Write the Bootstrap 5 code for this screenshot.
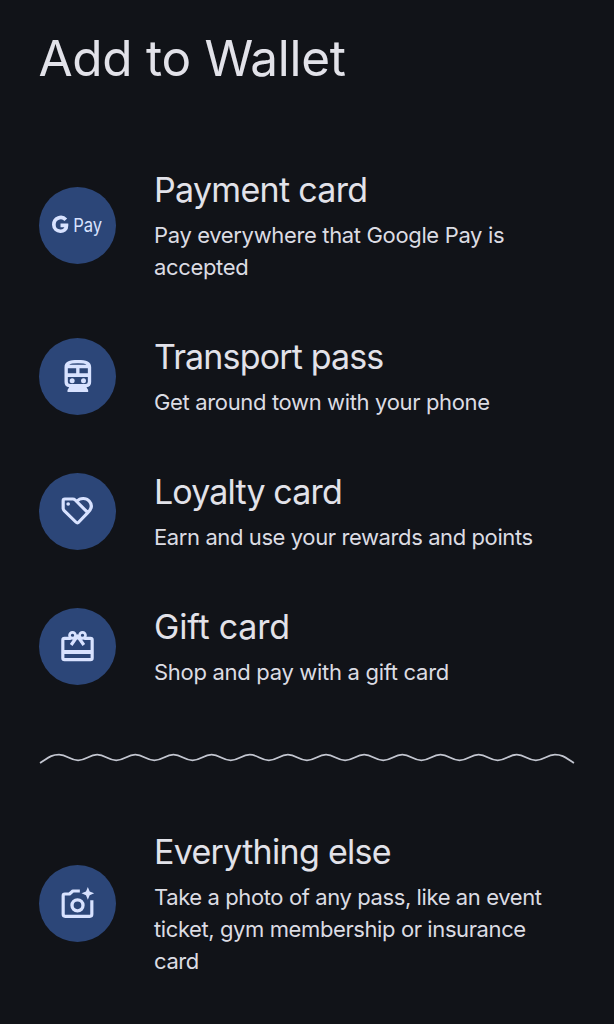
<!DOCTYPE html>
<html lang="en">
<head>
<meta charset="utf-8">
<meta name="viewport" content="width=device-width, initial-scale=1">
<title>Add to Wallet</title>
<link href="https://cdn.jsdelivr.net/npm/bootstrap@5.3.0/dist/css/bootstrap.min.css" rel="stylesheet">
<style>
body{background:#111318;color:#e2e2e9;font-family:Inter,"Open Sans",sans-serif;overflow:hidden}
.page-title{font-size:49.5px;line-height:60px;font-weight:400;padding:28px 0 0 38.5px;height:141.7px;letter-spacing:-.3px}
.option{padding:0 38px 0 38.5px;min-height:135px;gap:38.5px}
.option.lines-2{min-height:167.3px}
.option.lines-3{min-height:199.6px}
.disc{width:77px;height:77px;border-radius:50%;background:#2c4678;flex:none}
.disc svg{display:block;width:77px;height:77px;fill:none;stroke:#d8e2ff;stroke-width:9.5;stroke-linejoin:round}
.disc .solid{fill:#d8e2ff;stroke:none}
.disc .hole{fill:#2c4678;stroke:none}
.option h2{font-size:34px;line-height:46px;font-weight:400;margin:0 0 6px;letter-spacing:-.7px;white-space:nowrap}
.option h2.snug{letter-spacing:-.85px}
.option h2.open{letter-spacing:-.2px}
.option p{font-size:22px;line-height:32.3px;margin:0;padding-bottom:1px;color:#dcdce3;letter-spacing:-.35px;white-space:nowrap}
.option p.snug{letter-spacing:-.4px}
.wave{height:89.7px}
.wave svg{display:block;width:614px;height:89.7px}
</style>
</head>
<body>
<main>
<h1 class="page-title m-0">Add to Wallet</h1>
<section class="option lines-2 d-flex align-items-center">
  <div class="disc"><svg viewBox="25.5 21 231 231"><path d="M106 119C94 106 70 113 70 134C70 159 109 161 108 136H90" stroke-width="11" stroke-linejoin="miter"/><text class="solid" x="128" y="155" font-size="58" textLength="87" lengthAdjust="spacingAndGlyphs">Pay</text></svg></div>
  <div><h2>Payment card</h2><p>Pay everywhere that Google Pay is<br>accepted</p></div>
</section>
<section class="option d-flex align-items-center">
  <div class="disc"><svg viewBox="25.5 24 231 231"><path class="solid" d="M102 112C102 94 116 90 142 90S182 94 182 112V156Q182 170 168 172L173 180V186H111V180L116 172Q102 170 102 156Z"/><path class="hole" d="M116 104Q122 100 142 100T168 104ZM112 115H137V130H112ZM147 115H172V130H147ZM112 141H172V155Q172 162 165 162H119Q112 162 112 155Z"/><circle class="solid" cx="125" cy="152" r="7.5"/><circle class="solid" cx="159" cy="152" r="7.5"/></svg></div>
  <div><h2 class="snug">Transport pass</h2><p>Get around town with your phone</p></div>
</section>
<section class="option d-flex align-items-center">
  <div class="disc"><svg viewBox="25.5 24 231 231"><path d="M103 102H127Q131 102 134 105L172 143L145 171Q141 176 136 171L101 137Q98 134 98 130V107Q98 102 103 102ZM139 109C149 98 167 98 176 108C186 119 184 131 172 143"/><circle class="solid" cx="113" cy="117" r="5.5"/></svg></div>
  <div><h2 class="snug">Loyalty card</h2><p class="snug">Earn and use your rewards and points</p></div>
</section>
<section class="option d-flex align-items-center">
  <div class="disc"><svg viewBox="25.5 24 231 231"><rect x="97" y="115" width="88" height="64" rx="5"/><path d="M97 156H185" stroke-width="12"/><path d="M119 135L141 107L163 135" stroke="#2c4678" stroke-width="17"/><circle cx="126" cy="106" r="9" stroke-width="8"/><circle cx="156" cy="106" r="9" stroke-width="8"/><path d="M122 135L141 108L160 135M132 114H150"/></svg></div>
  <div><h2 class="open">Gift card</h2><p style="letter-spacing:-.3px">Shop and pay with a gift card</p></div>
</section>
<div class="wave" aria-hidden="true"><svg viewBox="0 714 614 89.7"><path id="wavePath" fill="none" stroke="#c3c6d0" stroke-width="1.8"/></svg></div>
<section class="option lines-3 d-flex align-items-center">
  <div class="disc"><svg viewBox="25.5 30 231 231"><path d="M148 108H127L117 117H103Q98 117 98 122V178Q98 184 104 184H178Q184 184 184 178V136"/><circle cx="141" cy="151" r="16.5" stroke-width="10"/><path class="solid" d="M172 96L177.5 109.500L191 115L177.500 120.500L172 134L166.500 120.500L153 115L166.500 109.500Z"/></svg></div>
  <div><h2>Everything else</h2><p class="snug">Take a photo of any pass, like an event<br>ticket, gym membership or insurance<br>card</p></div>
</section>
</main>
<script src="https://cdn.jsdelivr.net/npm/bootstrap@5.3.0/dist/js/bootstrap.bundle.min.js"></script>
<script>
// Fourteen crests joined by smooth troughs, with a tapered tail at each end
const step = 38.15;
let d = 'M40 763C48 758 51 754.7 59 754.7';
for (let i = 0; i < 13; i++) {
  const x = 59 + i * step;
  d += `C${x + 8} 754.7 ${x + 11} 760.3 ${x + step / 2} 760.3S${x + step - 8} 754.7 ${x + step} 754.7`;
}
d += 'C563 754.7 566 758 574 763';
document.getElementById('wavePath').setAttribute('d', d);
</script>
</body>
</html>
